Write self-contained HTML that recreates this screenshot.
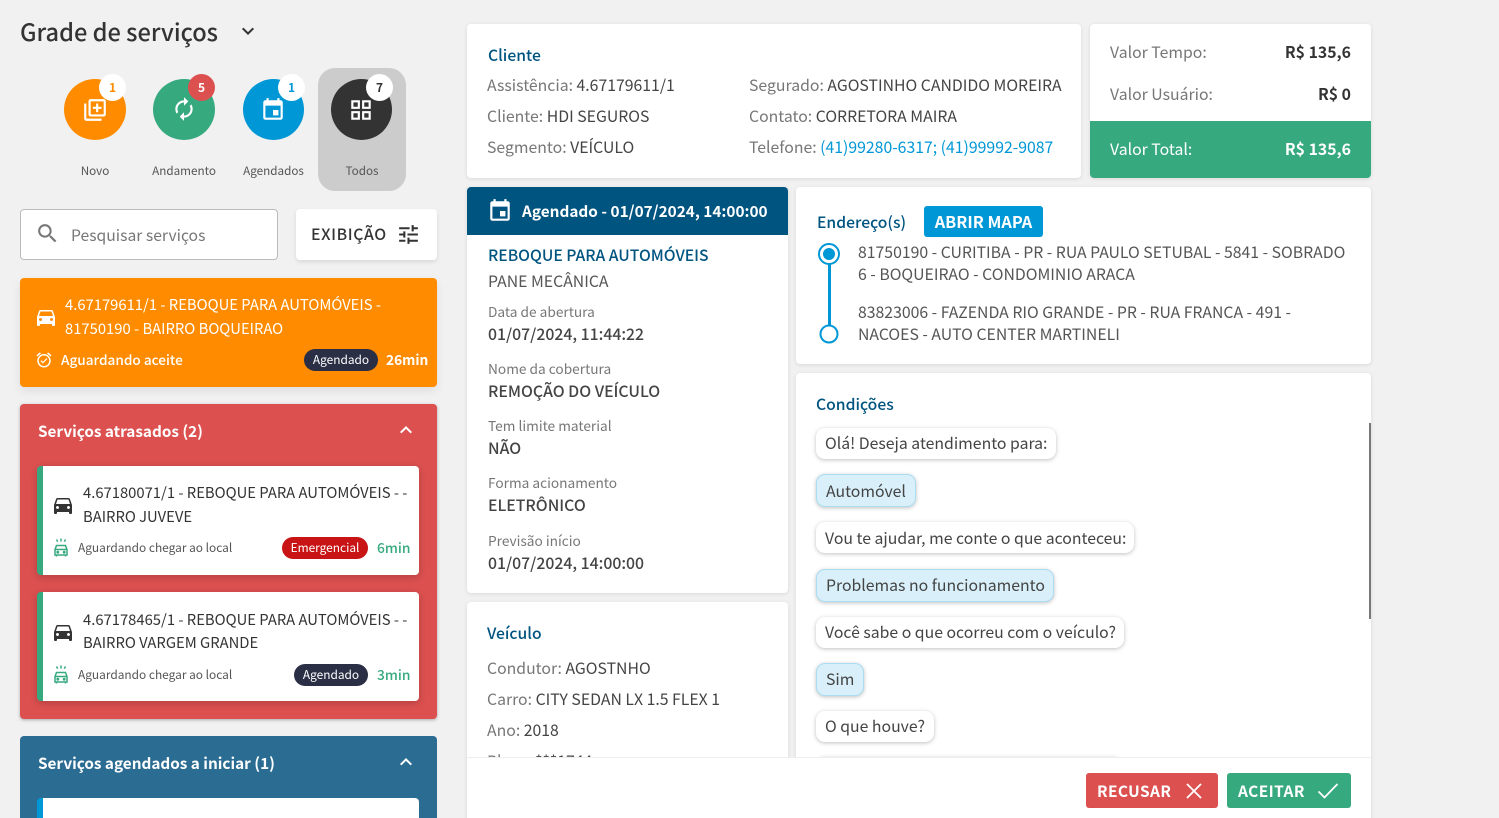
<!DOCTYPE html>
<html lang="pt-BR">
<head>
<meta charset="utf-8">
<title>Grade de serviços</title>
<style>
html,body{margin:0;padding:0;width:1499px;height:818px;overflow:hidden}
body{background:#f1f1f1;font-family:"Noto Sans CJK JP","Liberation Sans",sans-serif;color:#444}
#w{position:absolute;left:0;top:0;width:1499px;height:818px;overflow:hidden;background:#f1f1f1}
.b{position:absolute;box-sizing:border-box}
.t{position:absolute;white-space:nowrap;line-height:24px;height:24px}
.card{position:absolute;background:#fff;border-radius:4px;box-shadow:0 1px 4px rgba(0,0,0,.1)}
svg{position:absolute;display:block}
.c{border-radius:50%;position:absolute}
.lbl{font-size:11.7px;color:#555;transform:translateX(-50%)}
.badge{position:absolute;border-radius:50%;background:#fff;text-align:center;font-size:12px;font-weight:700;line-height:27px;width:27px;height:27px}
.pill{position:absolute;height:22px;border-radius:11px;color:#fff;font-size:11.9px;line-height:22px;text-align:center;background:#2a2f45}
.k{color:#777}
.f{font-size:15.8px;color:#444}
.h{font-size:15.7px;font-weight:500;color:#005480}
.sl{font-size:13.7px;color:#777}
.sv{font-size:15.8px;font-weight:500;color:#444}
.ct{font-size:14.8px;color:#333}
.st{font-size:11.9px;color:#555}
.bub{position:absolute;left:816px;box-sizing:border-box;border-radius:9px;background:#fff;box-shadow:0 1px 4px rgba(0,0,0,.25);font-size:15.8px;color:#444;padding-left:9px;line-height:31px;white-space:nowrap}
.bl{background:#d9f0fa;border:1px solid #aadcf2;padding-left:9px}
</style>
</head>
<body>
<div id="w">

<div class="t" style="left:20px;top:19px;font-size:23.6px;font-weight:500;color:#333">Grade de serviços</div>
<svg style="left:236px;top:19px" width="24" height="24" viewBox="0 0 24 24" fill="#333"><path d="M16.59 8.59L12 13.17 7.41 8.59 6 10l6 6 6-6z"/></svg>

<div class="b" style="left:318px;top:68px;width:88px;height:123px;background:#ccc;border-radius:17px"></div>
<div class="c" style="left:64px;top:79px;width:62px;height:61px;background:#ff8c00"></div>
<div class="c" style="left:153px;top:79px;width:62px;height:61px;background:#36a97f"></div>
<div class="c" style="left:243px;top:79px;width:61px;height:61px;background:#0097d6"></div>
<div class="c" style="left:331px;top:79px;width:61px;height:61px;background:#333"></div>

<svg style="left:82px;top:97px" width="26" height="26" viewBox="0 0 24 24" fill="#fff"><path d="M4 6H2v14c0 1.1.9 2 2 2h14v-2H4V6zm16-4H8c-1.1 0-2 .9-2 2v12c0 1.1.9 2 2 2h12c1.1 0 2-.9 2-2V4c0-1.1-.9-2-2-2zm0 14H8V4h12v12zm-7-2h2v-3h3V9h-3V6h-2v3h-3v2h3z"/></svg>
<svg style="left:171px;top:96px" width="26" height="26" viewBox="0 0 24 24" fill="#fff"><path d="M12 6v3l4-4-4-4v3c-4.42 0-8 3.58-8 8 0 1.57.46 3.03 1.24 4.26L6.7 14.8c-.45-.83-.7-1.79-.7-2.8 0-3.31 2.69-6 6-6zm6.76 1.74L17.3 9.2c.44.84.7 1.79.7 2.8 0 3.31-2.69 6-6 6v-3l-4 4 4 4v-3c4.42 0 8-3.58 8-8 0-1.57-.46-3.03-1.24-4.26z"/></svg>
<svg style="left:260px;top:97px" width="26" height="26" viewBox="0 0 24 24" fill="#fff"><path d="M17 12h-5v5h5v-5zM16 1v2H8V1H6v2H5c-1.11 0-1.99.9-1.99 2L3 19c0 1.1.89 2 2 2h14c1.1 0 2-.9 2-2V5c0-1.1-.9-2-2-2h-1V1h-2zm3 18H5V8h14v11z"/></svg>
<svg style="left:348px;top:97px" width="26" height="26" viewBox="0 0 24 24" fill="#fff"><path d="M3 3v8h8V3H3zm6 6H5V5h4v4zm-6 4v8h8v-8H3zm6 6H5v-4h4v4zm4-16v8h8V3h-8zm6 6h-4V5h4v4zm-6 4v8h8v-8h-8zm6 6h-4v-4h4v4z"/></svg>

<div class="badge" style="left:99px;top:74px;color:#ff8c00">1</div>
<div class="badge" style="left:188px;top:74px;background:#dc5050;color:#fff">5</div>
<div class="badge" style="left:278px;top:74px;color:#0097d6">1</div>
<div class="badge" style="left:366px;top:74px;color:#333">7</div>

<div class="t lbl" style="left:95px;top:159px">Novo</div>
<div class="t lbl" style="left:184px;top:159px">Andamento</div>
<div class="t lbl" style="left:273.5px;top:159px">Agendados</div>
<div class="t lbl" style="left:362px;top:159px">Todos</div>

<div class="b" style="left:20px;top:209px;width:258px;height:51px;background:#fff;border:1px solid #bbb;border-radius:4px"></div>
<svg style="left:35px;top:221px" width="25" height="25" viewBox="0 0 24 24" fill="#777"><path d="M15.5 14h-.79l-.28-.27C15.41 12.59 16 11.11 16 9.5 16 5.91 13.09 3 9.5 3S3 5.91 3 9.5 5.91 16 9.5 16c1.61 0 3.09-.59 4.23-1.57l.27.28v.79l5 4.99L20.49 19l-4.99-5zm-6 0C7.01 14 5 11.99 5 9.5S7.01 5 9.5 5 14 7.01 14 9.5 11.99 14 9.5 14z"/></svg>
<div class="t" style="left:71px;top:223px;font-size:15.7px;color:#777">Pesquisar serviços</div>

<div class="card" style="left:296px;top:209px;width:141px;height:51px;box-shadow:0 2px 5px rgba(0,0,0,.1)"></div>
<div class="t" style="left:311px;top:222px;font-size:15.8px;font-weight:500;color:#333;letter-spacing:.6px">EXIBIÇÃO</div>
<svg style="left:396px;top:222px" width="25" height="25" viewBox="0 0 24 24" fill="#333"><path d="M3 17v2h6v-2H3zM3 5v2h10V5H3zm10 16v-2h8v-2h-8v-2h-2v6h2zM7 9v2H3v2h4v2h2V9H7zm14 4v-2H11v2h10zm-6-4h2V7h4V5h-4V3h-2v6z"/></svg>

<!-- orange card -->
<div class="b" style="left:20px;top:278px;width:417px;height:109px;background:#ff8c00;border-radius:4px;box-shadow:0 4px 10px rgba(0,0,0,.08)"></div>
<svg style="left:34px;top:305px" width="24" height="24" viewBox="0 0 24 24" fill="#fff"><path d="M18.92 6.01C18.72 5.42 18.16 5 17.5 5h-11c-.66 0-1.21.42-1.42 1.01L3 12v8c0 .55.45 1 1 1h1c.55 0 1-.45 1-1v-1h12v1c0 .55.45 1 1 1h1c.55 0 1-.45 1-1v-8l-2.08-5.99zM6.5 16c-.83 0-1.5-.67-1.5-1.5S5.67 13 6.5 13s1.5.67 1.5 1.5S7.33 16 6.5 16zm11 0c-.83 0-1.5-.67-1.5-1.5s.67-1.5 1.5-1.5 1.5.67 1.5 1.5-.67 1.5-1.5 1.5zM5 11l1.5-4.5h11L19 11H5z"/></svg>
<div class="t" style="left:65px;top:293px;font-size:14.8px;color:#fff">4.67179611/1 - REBOQUE PARA AUTOMÓVEIS -</div>
<div class="t" style="left:65px;top:317px;font-size:14.8px;color:#fff">81750190 - BAIRRO BOQUEIRAO</div>
<svg style="left:35px;top:351px" width="18" height="18" viewBox="0 0 24 24" fill="#fff"><path d="M22 5.72l-4.6-3.86-1.29 1.53 4.6 3.86L22 5.72zM7.88 3.39L6.6 1.86 2 5.71l1.29 1.53 4.59-3.85zM12 4c-4.97 0-9 4.03-9 9s4.03 9 9 9 9-4.03 9-9-4.03-9-9-9zm0 16c-3.86 0-7-3.14-7-7s3.14-7 7-7 7 3.14 7 7-3.14 7-7 7zm-1.46-5.47L8.41 12.4l-1.06 1.06 3.18 3.18 6-6-1.06-1.06-4.93 4.95z"/></svg>
<div class="t" style="left:61px;top:347px;font-size:13.6px;color:#fff;font-weight:500">Aguardando aceite</div>
<div class="pill" style="left:304px;top:349px;width:74px">Agendado</div>
<div class="t" style="left:386px;top:347px;font-size:13.7px;color:#fff;font-weight:700">26min</div>

<!-- red panel -->
<div class="b" style="left:20px;top:404px;width:417px;height:315px;background:#dc5050;border-radius:4px;box-shadow:0 1px 3px rgba(0,0,0,.3)"></div>
<div class="t" style="left:38px;top:419px;font-size:15.3px;color:#fff;font-weight:700">Serviços atrasados (2)</div>
<svg style="left:394px;top:418px" width="24" height="24" viewBox="0 0 24 24" fill="#fff"><path d="M12 8l-6 6 1.41 1.41L12 10.83l4.59 4.58L18 14z"/></svg>

<div class="b" style="left:37px;top:466px;width:382px;height:109px;background:#fff;border-left:6px solid #36a97f;border-radius:4px;box-shadow:0 2px 8px rgba(0,0,0,.2)"></div>
<svg style="left:51px;top:493px" width="24" height="24" viewBox="0 0 24 24" fill="#333"><path d="M18.92 6.01C18.72 5.42 18.16 5 17.5 5h-11c-.66 0-1.21.42-1.42 1.01L3 12v8c0 .55.45 1 1 1h1c.55 0 1-.45 1-1v-1h12v1c0 .55.45 1 1 1h1c.55 0 1-.45 1-1v-8l-2.08-5.99zM6.5 16c-.83 0-1.5-.67-1.5-1.5S5.67 13 6.5 13s1.5.67 1.5 1.5S7.33 16 6.5 16zm11 0c-.83 0-1.5-.67-1.5-1.5s.67-1.5 1.5-1.5 1.5.67 1.5 1.5-.67 1.5-1.5 1.5zM5 11l1.5-4.5h11L19 11H5z"/></svg>
<div class="t ct" style="left:83px;top:481px">4.67180071/1 - REBOQUE PARA AUTOMÓVEIS - -</div>
<div class="t ct" style="left:83px;top:505px">BAIRRO JUVEVE</div>
<svg style="left:53px;top:538px" width="16" height="19" viewBox="0 0 16 19" fill="none" stroke="#36a97f" stroke-width="1.5"><path d="M3.5 7.5h9l1.5 4v5.5H2v-5.5z"/><path d="M2 11.5h12M3.5 17v1.5M12.5 17v1.5"/><path d="M8 .5v3M3.5 1.5l1.2 2.2M12.5 1.5l-1.2 2.2"/><circle cx="4.8" cy="14.2" r=".7" fill="#36a97f"/><circle cx="11.2" cy="14.2" r=".7" fill="#36a97f"/></svg>
<div class="t st" style="left:78px;top:536px">Aguardando chegar ao local</div>
<div class="pill" style="left:282px;top:537px;width:86px;background:#c81414">Emergencial</div>
<div class="t" style="left:377px;top:535px;font-size:13.8px;color:#36a97f;font-weight:500">6min</div>

<div class="b" style="left:37px;top:592px;width:382px;height:109px;background:#fff;border-left:6px solid #36a97f;border-radius:4px;box-shadow:0 2px 8px rgba(0,0,0,.2)"></div>
<svg style="left:51px;top:620px" width="24" height="24" viewBox="0 0 24 24" fill="#333"><path d="M18.92 6.01C18.72 5.42 18.16 5 17.5 5h-11c-.66 0-1.21.42-1.42 1.01L3 12v8c0 .55.45 1 1 1h1c.55 0 1-.45 1-1v-1h12v1c0 .55.45 1 1 1h1c.55 0 1-.45 1-1v-8l-2.08-5.99zM6.5 16c-.83 0-1.5-.67-1.5-1.5S5.67 13 6.5 13s1.5.67 1.5 1.5S7.33 16 6.5 16zm11 0c-.83 0-1.5-.67-1.5-1.5s.67-1.5 1.5-1.5 1.5.67 1.5 1.5-.67 1.5-1.5 1.5zM5 11l1.5-4.5h11L19 11H5z"/></svg>
<div class="t ct" style="left:83px;top:608px">4.67178465/1 - REBOQUE PARA AUTOMÓVEIS - -</div>
<div class="t ct" style="left:83px;top:631px">BAIRRO VARGEM GRANDE</div>
<svg style="left:53px;top:665px" width="16" height="19" viewBox="0 0 16 19" fill="none" stroke="#36a97f" stroke-width="1.5"><path d="M3.5 7.5h9l1.5 4v5.5H2v-5.5z"/><path d="M2 11.5h12M3.5 17v1.5M12.5 17v1.5"/><path d="M8 .5v3M3.5 1.5l1.2 2.2M12.5 1.5l-1.2 2.2"/><circle cx="4.8" cy="14.2" r=".7" fill="#36a97f"/><circle cx="11.2" cy="14.2" r=".7" fill="#36a97f"/></svg>
<div class="t st" style="left:78px;top:663px">Aguardando chegar ao local</div>
<div class="pill" style="left:294px;top:664px;width:74px">Agendado</div>
<div class="t" style="left:377px;top:662px;font-size:13.8px;color:#36a97f;font-weight:500">3min</div>

<!-- blue panel -->
<div class="b" style="left:20px;top:736px;width:417px;height:100px;background:#2b6c93;border-radius:4px"></div>
<div class="t" style="left:38px;top:751px;font-size:15.3px;color:#fff;font-weight:700">Serviços agendados a iniciar (1)</div>
<svg style="left:394px;top:750px" width="24" height="24" viewBox="0 0 24 24" fill="#fff"><path d="M12 8l-6 6 1.41 1.41L12 10.83l4.59 4.58L18 14z"/></svg>
<div class="b" style="left:37px;top:798px;width:382px;height:40px;background:#fff;border-left:6px solid #0097d6;border-radius:4px"></div>

<!-- cliente -->
<div class="card" style="left:467px;top:24px;width:614px;height:154px"></div>
<div class="t h" style="left:488px;top:43px">Cliente</div>
<div class="t f" style="left:487px;top:73px"><span class="k">Assistência:</span> 4.67179611/1</div>
<div class="t f" style="left:487px;top:104px"><span class="k">Cliente:</span> HDI SEGUROS</div>
<div class="t f" style="left:487px;top:135px"><span class="k">Segmento:</span> VEÍCULO</div>
<div class="t f" style="left:749px;top:73px"><span class="k">Segurado:</span> AGOSTINHO CANDIDO MOREIRA</div>
<div class="t f" style="left:749px;top:104px"><span class="k">Contato:</span> CORRETORA MAIRA</div>
<div class="t f" style="left:749px;top:135px"><span class="k">Telefone:</span> <span style="color:#0097d6">(41)99280-6317; (41)99992-9087</span></div>

<!-- valores -->
<div class="card" style="left:1090px;top:24px;width:281px;height:154px"></div>
<div class="b" style="left:1090px;top:121px;width:281px;height:57px;background:#36a97f;border-radius:0 0 4px 4px"></div>
<div class="t f" style="left:1110px;top:40px;color:#777">Valor Tempo:</div>
<div class="t f" style="right:148px;top:40px;font-weight:700;color:#333">R$ 135,6</div>
<div class="t f" style="left:1110px;top:82px;color:#777">Valor Usuário:</div>
<div class="t f" style="right:148px;top:82px;font-weight:700;color:#333">R$ 0</div>
<div class="t f" style="left:1110px;top:137px;color:#fff">Valor Total:</div>
<div class="t f" style="right:148px;top:137px;color:#fff;font-weight:700">R$ 135,6</div>

<!-- agendado -->
<div class="card" style="left:467px;top:187px;width:321px;height:406px"></div>
<div class="b" style="left:467px;top:187px;width:321px;height:48px;background:#005480;border-radius:4px 4px 0 0"></div>
<svg style="left:487px;top:198px" width="26" height="26" viewBox="0 0 24 24" fill="#fff"><path d="M17 12h-5v5h5v-5zM16 1v2H8V1H6v2H5c-1.11 0-1.99.9-1.99 2L3 19c0 1.1.89 2 2 2h14c1.1 0 2-.9 2-2V5c0-1.1-.9-2-2-2h-1V1h-2zm3 18H5V8h14v11z"/></svg>
<div class="t" style="left:522px;top:199px;font-size:15.35px;color:#fff;font-weight:700">Agendado - 01/07/2024, 14:00:00</div>
<div class="t h" style="left:488px;top:243px">REBOQUE PARA AUTOMÓVEIS</div>
<div class="t f" style="left:488px;top:269px;color:#555">PANE MECÂNICA</div>
<div class="t sl" style="left:488px;top:299px">Data de abertura</div>
<div class="t sv" style="left:488px;top:322px">01/07/2024, 11:44:22</div>
<div class="t sl" style="left:488px;top:356px">Nome da cobertura</div>
<div class="t sv" style="left:488px;top:379px">REMOÇÃO DO VEÍCULO</div>
<div class="t sl" style="left:488px;top:413px">Tem limite material</div>
<div class="t sv" style="left:488px;top:436px">NÃO</div>
<div class="t sl" style="left:488px;top:470px">Forma acionamento</div>
<div class="t sv" style="left:488px;top:493px">ELETRÔNICO</div>
<div class="t sl" style="left:488px;top:528px">Previsão início</div>
<div class="t sv" style="left:488px;top:551px">01/07/2024, 14:00:00</div>

<!-- veiculo -->
<div class="card" style="left:467px;top:602px;width:321px;height:240px"></div>
<div class="t h" style="left:487px;top:621px">Veículo</div>
<div class="t f" style="left:487px;top:656px"><span class="k">Condutor:</span> AGOSTNHO</div>
<div class="t f" style="left:487px;top:687px"><span class="k">Carro:</span> CITY SEDAN LX 1.5 FLEX 1</div>
<div class="t f" style="left:487px;top:718px"><span class="k">Ano:</span> 2018</div>
<div class="t f" style="left:487px;top:749px"><span class="k">Placa:</span> ***1744</div>

<!-- enderecos -->
<div class="card" style="left:796px;top:187px;width:575px;height:177px"></div>
<div class="t h" style="left:817px;top:210px">Endereço(s)</div>
<div class="b" style="left:924px;top:206px;width:119px;height:31px;background:#0097d6;border-radius:3px;color:#fff;font-size:16.3px;font-weight:700;text-align:center;line-height:30px">ABRIR MAPA</div>
<svg style="left:817px;top:242px" width="24" height="104" viewBox="0 0 24 104" fill="none"><path d="M12.5 20v64" stroke="#0097d6" stroke-width="3"/><circle cx="12" cy="12" r="10" stroke="#0097d6" stroke-width="2" fill="#fff"/><circle cx="12" cy="12" r="6" fill="#0097d6"/><circle cx="12" cy="92" r="8.5" stroke="#0097d6" stroke-width="2" fill="#fff"/></svg>
<div class="t f" style="left:858px;top:240px;color:#555">81750190 - CURITIBA - PR - RUA PAULO SETUBAL - 5841 - SOBRADO</div>
<div class="t f" style="left:858px;top:262px;color:#555">6 - BOQUEIRAO - CONDOMINIO ARACA</div>
<div class="t f" style="left:858px;top:300px;color:#555">83823006 - FAZENDA RIO GRANDE - PR - RUA FRANCA - 491 -</div>
<div class="t f" style="left:858px;top:322px;color:#555">NACOES - AUTO CENTER MARTINELI</div>

<!-- condicoes -->
<div class="card" style="left:796px;top:373px;width:575px;height:460px"></div>
<div class="t h" style="left:816px;top:392px">Condições</div>
<div class="bub" style="top:428px;width:240px;height:31px;line-height:29px">Olá! Deseja atendimento para:</div>
<div class="bub bl" style="top:474px;width:100px;height:33px">Automóvel</div>
<div class="bub" style="top:522px;width:318px;height:31px">Vou te ajudar, me conte o que aconteceu:</div>
<div class="bub bl" style="top:569px;width:238px;height:33px;line-height:29px">Problemas no funcionamento</div>
<div class="bub" style="top:617px;width:308px;height:31px;line-height:29px">Você sabe o que ocorreu com o veículo?</div>
<div class="bub bl" style="top:663px;width:48px;height:33px;line-height:29px">Sim</div>
<div class="bub" style="top:711px;width:118px;height:31px;line-height:29px">O que houve?</div>
<div class="bub bl" style="top:757px;width:306px;height:33px"></div>
<div class="b" style="left:1369px;top:423px;width:2px;height:196px;background:#777"></div>

<!-- footer -->
<div class="b" style="left:467px;top:757px;width:904px;height:61px;background:#fff;border-top:1px solid #eee"></div>
<div class="b" style="left:1086px;top:773px;width:132px;height:35px;background:#dc5050;border-radius:3px"></div>
<div class="t" style="left:1097px;top:779px;font-size:15.5px;font-weight:700;color:#fff;letter-spacing:.4px">RECUSAR</div>
<svg style="left:1185px;top:782px" width="18" height="18" viewBox="0 0 18 18" fill="none" stroke="#fff" stroke-width="1.8"><path d="M2 2l14 14M16 2L2 16"/></svg>
<div class="b" style="left:1227px;top:773px;width:124px;height:35px;background:#36a97f;border-radius:3px"></div>
<div class="t" style="left:1238px;top:779px;font-size:15.5px;font-weight:700;color:#fff;letter-spacing:.4px">ACEITAR</div>
<svg style="left:1317px;top:782px" width="22" height="18" viewBox="0 0 22 18" fill="none" stroke="#fff" stroke-width="1.8"><path d="M1.5 9.5l6 6L20.5 2"/></svg>

</div>
</body>
</html>
